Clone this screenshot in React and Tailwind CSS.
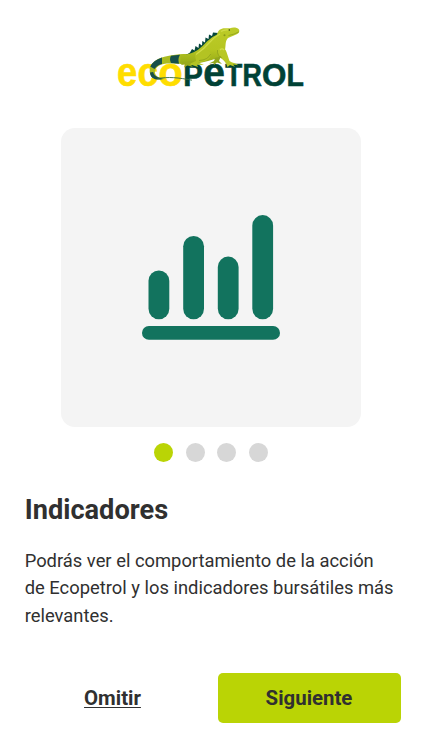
import React from 'react';

const steps = [0, 1, 2, 3];

const Logo = () => (
    <svg width="200" height="75" viewBox="110 20 200 75" role="img" aria-label="Ecopetrol">
        <defs>
            <linearGradient id="skin" x1="0" y1="0" x2="0" y2="1">
                <stop offset="0" stopColor="#bccb28" />
                <stop offset="0.6" stopColor="#b5c521" />
                <stop offset="1" stopColor="#95aa18" />
            </linearGradient>
        </defs>
        <g fontFamily="'Liberation Sans', sans-serif" fontWeight="700" strokeWidth="0.6">
            <g fill="#ffdd00" stroke="#ffdd00" fontSize="40">
                <text x="117" y="86" textLength="20.2" lengthAdjust="spacingAndGlyphs">e</text>
                <text x="137.5" y="86" textLength="20.6" lengthAdjust="spacingAndGlyphs">c</text>
                <text x="158.5" y="86" textLength="24.3" lengthAdjust="spacingAndGlyphs">o</text>
            </g>
            <g fill="#004236" stroke="#004236">
                <text x="183.2" y="86" fontSize="31.5" textLength="19.6" lengthAdjust="spacingAndGlyphs">P</text>
                <text x="203.2" y="86" fontSize="40" textLength="21.6" lengthAdjust="spacingAndGlyphs">e</text>
                <text x="225.2" y="86" fontSize="31.5" textLength="17" lengthAdjust="spacingAndGlyphs">T</text>
                <text x="242.4" y="86" fontSize="31.5" textLength="19.4" lengthAdjust="spacingAndGlyphs">R</text>
                <text x="262" y="86" fontSize="31.5" textLength="24.4" lengthAdjust="spacingAndGlyphs">O</text>
                <text x="286.6" y="86" fontSize="31.5" textLength="17.4" lengthAdjust="spacingAndGlyphs">L</text>
            </g>
        </g>

        {/* tail */}
        <path d="M188 54 C176 54 166 55.5 158 59 C150 63 147.5 71 151.5 76.5 C155 80 160 79.8 166 79 L158 77 C153.5 74 154 69 158.5 66 C165 61.5 176 64.5 191 64 Z" fill="#a9bb20" />
        <path d="M162 57.5 C156 59.5 152 62.5 150.2 66.5 L154.5 69 C156.5 66 159.5 64.5 162 64 Z" fill="#16504a" />
        <path d="M171 55.8 L180 54.8 Q177.5 59 179 63.8 L171 63 Q169 59 171 55.8 Z" fill="#16504a" />
        <path d="M150 72.5 C150.5 79 156 80.5 163 79 L158 77.3 C155 76 153.5 74 153.2 72 Z" fill="#16504a" />
        <path d="M157 78.8 C168 76.3 179 77.8 192 80.2" fill="none" stroke="#346b42" strokeWidth="0.9" />
        {/* crest */}
        <path d="M186 55 L190 52.5 L192 49 L194.5 50.5 L195.5 46 L198.5 48 L199 43.5 L202 45.5 L202.3 41 L205 42.5 L205.5 37.5 L208.5 39 L209 34.5 L212 36 L213 32.5 L218 33 L217 39 L203 51 L190 57 Z" fill="#07483c" />
        {/* body and head */}
        <path d="M181 54.8 C191 55 197 51 202 46.5 C208 40.5 211 37.5 217 34.5 C218 30 221 27.8 226 28.2 L230 28.3 C233 27 237 27.3 239 29.5 C240 32 238.5 34 235 35 L228 38 C225 41 226 45 225 50 C223 57 215 59 208 61 C198 64 189 65 180 63.5 Z" fill="url(#skin)" />
        {/* legs */}
        <path d="M195 55 C199 48 209 47 211 54 C211 60 204 62 198 62.5 L204 65 L197 64.8 L198 67 L192 65 L189 66 L190 63.5 L196 61 Z" fill="#b3c323" />
        <path d="M217 50 C219 46 225 47 226.5 52 L229.5 61 C232 63.2 236 63 238.5 65.2 L233 64.5 L235 66.8 L230 65 L227.5 67 C226 62 223 59 219 57 Z" fill="#b8c725" />
        <path d="M183 62 L194 61 L190 64 L193 67 L187.5 65.5 L184 67.5 L185 64.5 L181 65 Z" fill="#99aa1b" />
        <path d="M215 58 L221 56 L219 61 L222 64 L217 62.6 L214 65 L213.5 63 L209 63.5 L214 61 Z" fill="#92a71d" />
        {/* light and shade */}
        <path d="M196 54.5 Q204 49 209 43 T220 34 M221 31.5 Q224 29.3 229 30 M220 50 Q222 47.8 224 50" fill="none" stroke="#d0dc48" strokeWidth="1.2" />
        <path d="M199 60.5 Q208 60 210.7 54 M217.5 50 Q217 56 222 58 M228.5 35.5 Q234 34.6 239 31.8" fill="none" stroke="#869b1b" strokeWidth="0.7" />
        <circle cx="229.3" cy="30" r="0.8" fill="#33480e" />
        <circle cx="224.5" cy="35.3" r="1" fill="#899b19" />
    </svg>
);

const ChartIcon = () => (
    <svg width="138" height="126" viewBox="142 215 138 126" fill="#12735e" className="-ml-px">
        <rect x="148.5" y="270.4" width="20.8" height="48.8" rx="10.4" />
        <rect x="183.2" y="235.9" width="20.8" height="83.3" rx="10.4" />
        <rect x="217.8" y="256.6" width="20.8" height="62.6" rx="10.4" />
        <rect x="252.3" y="215.1" width="20.8" height="104.1" rx="10.4" />
        <rect x="142" y="326" width="138" height="13.8" rx="6.9" />
    </svg>
);

const Onboarding = () => {
    return (
        <main className="flex h-[750px] w-[422px] flex-col overflow-hidden bg-white font-['Roboto',sans-serif] text-[#303030]">
            <header className="flex pl-[110px] pt-5">
                <Logo />
            </header>

            <section className="ml-[61.4px] mt-[32.5px] flex h-[299.5px] w-[299.5px] flex-col items-center rounded-[14px] bg-[#f4f4f4] pt-[87.5px]">
                <ChartIcon />
            </section>

            <div className="mt-4 flex h-[19px] gap-[12.7px] pl-[154.4px]">
                {steps.map((step) => (
                    <span
                        key={step}
                        className={`size-[18.8px] rounded-full ${step === 0 ? 'bg-[#bad405]' : 'bg-[#d7d7d7]'}`}
                    />
                ))}
            </div>

            <section className="px-[24.7px] pt-[30px]">
                <h1 className="text-[27.2px] font-bold leading-9">Indicadores</h1>
                <p className="mt-[18.6px] whitespace-nowrap text-[18.36px] leading-[27.8px]">
                    Podrás ver el comportamiento de la acción
                    <br />
                    de Ecopetrol y los indicadores bursátiles más
                    <br />
                    relevantes.
                </p>
            </section>

            <footer className="mt-[43px] flex h-[50px] pl-[21px]">
                <button className="w-[183px] text-[20.4px] font-bold">
                    <span className="underline decoration-1 underline-offset-[2px] [text-decoration-skip-ink:none]">Omitir</span>
                </button>
                <button className="ml-[13.5px] w-[183px] rounded-[5px] bg-[#bad405] text-[20.4px] font-bold">
                    Siguiente
                </button>
            </footer>
        </main>
    );
};

export default Onboarding;
